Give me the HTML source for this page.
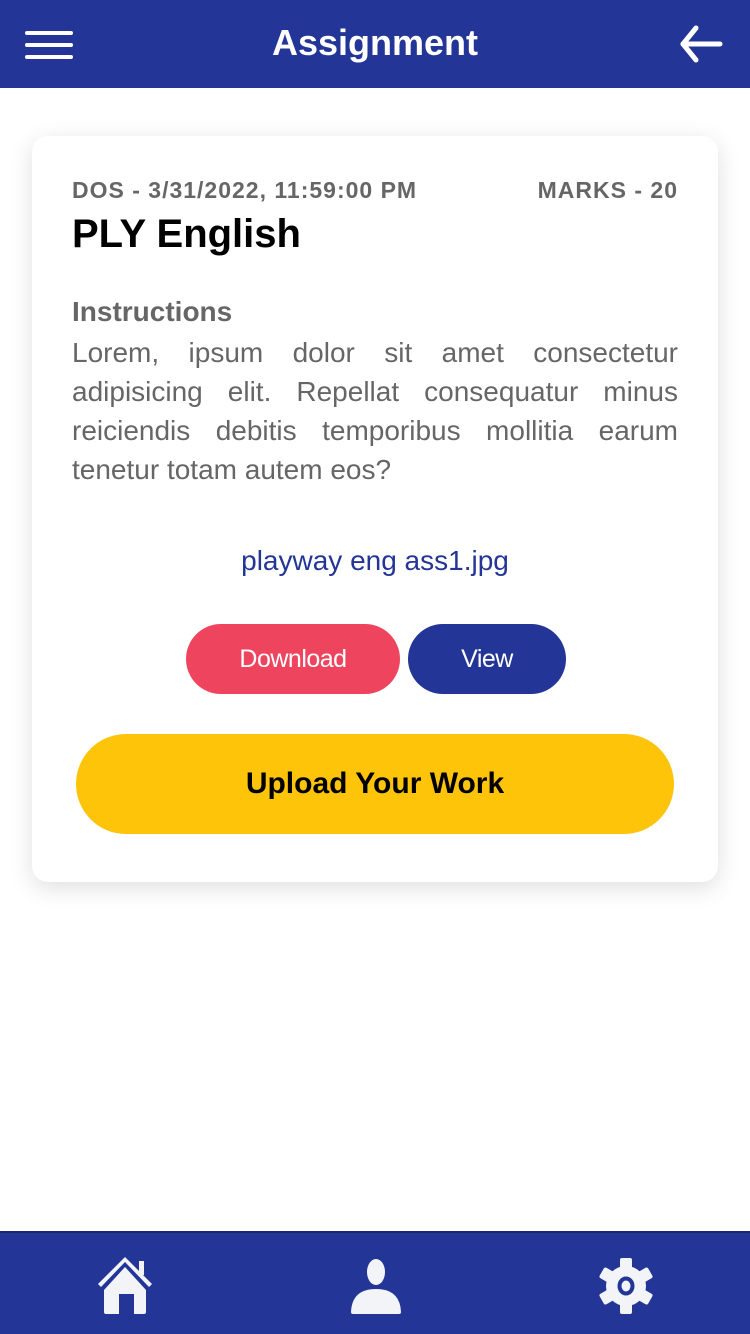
<!DOCTYPE html>
<html><head><meta charset="utf-8"><style>
*{margin:0;padding:0;box-sizing:border-box}
body{width:750px;height:1334px;background:#fff;font-family:"Liberation Sans",Arial,sans-serif;position:relative;overflow:hidden}
.hdr{position:absolute;top:0;left:0;width:750px;height:88px;background:#233596;color:#fff}
.hdr h1{position:absolute;top:22px;width:100%;text-align:center;font-size:36px;font-weight:bold}
.card{position:absolute;left:32px;top:136px;width:686px;height:746px;background:#fff;border-radius:16px;box-shadow:0 6px 24px rgba(0,0,0,.13)}
.meta{position:absolute;top:41px;left:40px;right:40px;font-size:23px;font-weight:bold;color:#666;letter-spacing:1px}
.meta span{float:right}
.title{position:absolute;left:40px;top:76px;font-size:40px;font-weight:bold;color:#000}
.ins{position:absolute;left:40px;top:160px;font-size:28px;font-weight:bold;color:#666}
.txt{position:absolute;left:40px;width:606px;top:197px;font-size:28px;line-height:39px;color:#666;text-align:justify;text-align-last:left}
.file{position:absolute;top:409px;width:100%;text-align:center;font-size:28px;color:#233596}
.btn{position:absolute;top:488px;height:70px;border-radius:35px;color:#fff;font-size:25px;text-align:center;line-height:70px;letter-spacing:-.5px}
.up{position:absolute;left:44px;top:598px;width:598px;height:100px;border-radius:50px;background:#fec409;text-align:center;line-height:100px;font-size:30px;font-weight:bold;color:#000}
.ftr{position:absolute;top:1231px;left:0;width:750px;height:103px;background:#233596;border-top:2px solid #1a2670}
</style></head><body>
<div class="hdr">
<svg style="position:absolute;left:25px;top:30px" width="48" height="30"><g stroke="#fff" stroke-width="4" stroke-linecap="round"><line x1="2" y1="3" x2="46" y2="3"/><line x1="2" y1="15" x2="46" y2="15"/><line x1="2" y1="27" x2="46" y2="27"/></g></svg>
<h1>Assignment</h1>
<svg style="position:absolute;left:678px;top:24px" width="46" height="40"><g stroke="#fff" stroke-width="5" stroke-linecap="round" stroke-linejoin="round" fill="none"><line x1="5" y1="20" x2="42" y2="20"/><polyline points="18,4 5,20 18,36"/></g></svg>
</div>
<div class="card">
<div class="meta">DOS - 3/31/2022, 11:59:00 PM<span>MARKS - 20</span></div>
<div class="title">PLY English</div>
<div class="ins">Instructions</div>
<div class="txt">Lorem, ipsum dolor sit amet consectetur adipisicing elit. Repellat consequatur minus reiciendis debitis temporibus mollitia earum tenetur totam autem eos?</div>
<div class="file">playway eng ass1.jpg</div>
<div class="btn" style="left:154px;width:214px;background:#ee445e">Download</div>
<div class="btn" style="left:376px;width:158px;background:#233596">View</div>
<div class="up">Upload Your Work</div>
</div>
<div class="ftr">
<svg style="position:absolute;left:96px;top:24px" width="60" height="58" viewBox="0 0 60 58"><g fill="#f3f4f8"><rect x="43" y="4" width="5" height="14"/><path d="M2 27 L29 0 L56 27 L53 30 L29 5 L5 30Z"/><path d="M8 33 L29 10 L50 33 V55 Q50 57 48 57 H38 V37 H23 V57 H10 Q8 57 8 55Z"/></g></svg>
<svg style="position:absolute;left:350px;top:26px" width="52" height="55" viewBox="0 0 52 55"><g fill="#f3f4f8"><ellipse cx="26" cy="13" rx="9" ry="13"/><path d="M1 53 Q2 30 26 30 Q50 30 51 53 Q51 55 49 55 H3 Q1 55 1 53Z"/></g></svg>
<svg style="position:absolute;left:597px;top:24px" width="58" height="58" viewBox="-29 -29 58 58"><g fill="#f3f4f8"><circle r="20"/><g id="t"><rect x="-6" y="-28" width="12" height="12" rx="2"/></g><use href="#t" transform="rotate(60)"/><use href="#t" transform="rotate(120)"/><use href="#t" transform="rotate(180)"/><use href="#t" transform="rotate(240)"/><use href="#t" transform="rotate(300)"/></g><ellipse rx="6.5" ry="7.5" fill="none" stroke="#233596" stroke-width="4"/></svg>
</div>
</body></html>
